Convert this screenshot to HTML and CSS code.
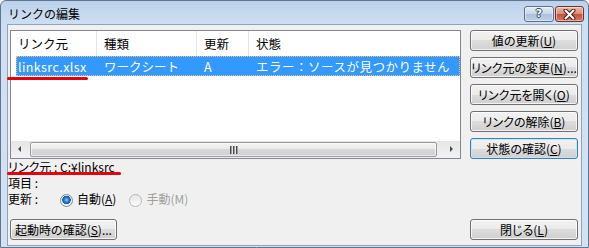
FILE: index.html
```html
<!DOCTYPE html>
<html lang="ja">
<head>
    <meta charset="UTF-8">
    <title>リンクの編集</title>
    <link rel="stylesheet" href="styles.css">
</head>
<body>
    <div class="window">
        <div class="titlebar">
            <span class="title">リンクの編集</span>
            <div class="caption-buttons">
                <span class="cap help">?</span>
                <span class="cap close">
                    <svg width="13" height="11" viewBox="0 0 13 11">
                        <path d="M2.5 1.5 L10.5 9.5 M10.5 1.5 L2.5 9.5" stroke="#4a2018" stroke-width="4" stroke-linecap="round"/>
                        <path d="M2.5 1.5 L10.5 9.5 M10.5 1.5 L2.5 9.5" stroke="#ffffff" stroke-width="2" stroke-linecap="round"/>
                    </svg>
                </span>
            </div>
        </div>

        <div class="client">
            <div class="left">
                <div class="listbox">
                    <div class="list-head">
                        <span class="cell c1">リンク元</span>
                        <span class="cell c2">種類</span>
                        <span class="cell c3">更新</span>
                        <span class="cell c4">状態</span>
                    </div>
                    <div class="list-body">
                        <div class="row selected">
                            <span class="cell c1">linksrc.xlsx</span>
                            <span class="cell c2">ワークシート</span>
                            <span class="cell c3">A</span>
                            <span class="cell c4 status">エラー：ソースが見つかりません</span>
                        </div>
                    </div>
                    <div class="hscroll">
                        <span class="arrow arrow-left"></span>
                        <span class="thumb"><span class="grip"></span></span>
                        <span class="arrow arrow-right"></span>
                    </div>
                </div>

                <div class="info">
                    <span>リンク元&nbsp;:</span><span>C:¥linksrc</span>
                    <span>項目&nbsp;:</span><span></span>
                    <span>更新&nbsp;:</span>
                    <span class="radios">
                        <label class="radio"><span class="dot checked"></span><span>自動(<u>A</u>)</span></label>
                        <label class="radio disabled"><span class="dot"></span><span>手動(M)</span></label>
                    </span>
                </div>

                <button class="btn start-btn">起動時の確認(<u>S</u>)...</button>
            </div>

            <div class="right">
                <button class="btn">値の更新(<u>U</u>)</button>
                <button class="btn">リンク元の変更(<u>N</u>)...</button>
                <button class="btn">リンク元を開く(<u>O</u>)</button>
                <button class="btn">リンクの解除(<u>B</u>)</button>
                <button class="btn focused">状態の確認(<u>C</u>)</button>
                <button class="btn close-btn">閉じる(<u>L</u>)</button>
            </div>
        </div>

        <div class="mark mark-file"></div>
        <div class="mark mark-source"></div>
    </div>
</body>
</html>
```

FILE: styles.css
```css
body {
    margin: 0;
    font-family: "Noto Sans CJK JP", sans-serif;
    font-size: 12px;
    color: #000;
}

.window {
    position: relative;
    width: 589px;
    height: 248px;
    box-sizing: border-box;
    border: 1px solid #5f7590;
    border-radius: 6px 6px 0 0;
    padding-bottom: 1px;
    background: linear-gradient(#bcd2eb, #cfdff2 24px, #d3e2f3);
    display: flex;
    flex-direction: column;
    overflow: hidden;
}

.titlebar {
    height: 23px;
    flex-shrink: 0;
    display: flex;
    align-items: center;
    padding: 0 4px 0 7px;
}

.title {
    flex: 1;
    line-height: 14px;
    margin-top: 2px;
}

.caption-buttons {
    display: flex;
    gap: 1px;
    align-self: flex-start;
    margin-top: 5px;
}

.cap {
    width: 30px;
    height: 16px;
    box-sizing: border-box;
    border: 1px solid #5e718a;
    border-radius: 3px;
    display: flex;
    align-items: center;
    justify-content: center;
    box-shadow: inset 0 0 0 1px rgba(255, 255, 255, 0.45);
}

.cap.help {
    background: linear-gradient(#e4ecf6, #c6d6ea 50%, #aac0db 50%, #bcd0e8);
    color: #fff;
    font-family: "DejaVu Sans", sans-serif;
    font-weight: bold;
    font-size: 11px;
    line-height: 12px;
    text-shadow: 1px 0 0 #35455a, -1px 0 0 #35455a, 0 1px 0 #35455a, 0 -1px 0 #35455a;
}

.cap.close {
    width: 29px;
    border-color: #6b3228;
    background: linear-gradient(#ecb9ab, #d98b77 50%, #c4513a 50%, #d9785f);
}

.client {
    flex: 1;
    margin: 0 6px;
    border: 1px solid #8ea3bc;
    background-color: #f0f0f0;
    display: flex;
    gap: 9px;
    padding: 5px 3px 5px 2px;
}

.left {
    width: 451px;
    display: flex;
    flex-direction: column;
}

.right {
    width: 108px;
    display: flex;
    flex-direction: column;
    gap: 6px;
}

.listbox {
    height: 129px;
    box-sizing: border-box;
    border: 1px solid #828790;
    background-color: #fff;
    display: flex;
    flex-direction: column;
}

.list-head {
    height: 25px;
    display: flex;
    flex-shrink: 0;
    font-size: 12.5px;
}

.list-head .cell {
    border-right: 1px solid #e3e5e8;
}

.list-head .c4 {
    border-right: none;
}

.cell {
    box-sizing: border-box;
    padding-left: 7px;
    display: flex;
    align-items: center;
    white-space: nowrap;
    overflow: hidden;
}

.c1 { width: 86px; }
.c2 { width: 100px; }
.c3 { width: 52px; }
.c4 { flex: 1; }

.list-body {
    flex: 1;
}

.row {
    height: 20px;
    display: flex;
    margin-left: 5px;
    font-size: 12.5px;
}

.row .c1 {
    width: 81px;
    padding-left: 2px;
    letter-spacing: 0.4px;
}

.row .status {
    letter-spacing: 0.5px;
}

.row.selected {
    background-color: #3399ff;
    color: #fff;
    outline: 1px dotted #f2c07a;
    outline-offset: -1px;
}

.hscroll {
    height: 17px;
    flex-shrink: 0;
    display: flex;
    align-items: center;
    background: linear-gradient(#e6e6e6, #f2f2f2);
}

.arrow {
    width: 18px;
    height: 17px;
    position: relative;
    flex-shrink: 0;
}

.arrow::after {
    content: "";
    position: absolute;
    top: 5px;
    border-top: 3px solid transparent;
    border-bottom: 3px solid transparent;
}

.arrow-left::after {
    left: 7px;
    border-right: 3px solid #4a4a4a;
}

.arrow-right {
    margin-left: auto;
}

.arrow-right::after {
    left: 8px;
    border-left: 3px solid #4a4a4a;
}

.thumb {
    width: 407px;
    height: 15px;
    margin-left: 1px;
    box-sizing: border-box;
    border: 1px solid #9a9a9a;
    border-radius: 2px;
    background: linear-gradient(#f4f4f4, #eaeaea 45%, #d8d8d8 50%, #cfcfcf);
    box-shadow: inset 0 0 0 1px rgba(255, 255, 255, 0.6);
    display: flex;
    align-items: center;
    justify-content: center;
}

.grip {
    width: 8px;
    height: 8px;
    background: repeating-linear-gradient(90deg, #4c4c4c 0 1px, #9c9c9c 1px 2px, #e6e6e6 2px 3px);
}

.info {
    display: grid;
    grid-template-columns: 52px auto;
    margin-left: -2px;
    line-height: 16px;
    font-feature-settings: "palt";
}

.radios {
    display: flex;
    align-items: center;
    gap: 13px;
}

.radio {
    display: flex;
    align-items: center;
    gap: 4px;
}

.radio.disabled {
    color: #a0a0a0;
}

.dot {
    width: 13px;
    height: 13px;
    box-sizing: border-box;
    border-radius: 50%;
    border: 1px solid #b9b9b9;
    background: linear-gradient(#e6e6e6, #fbfbfb);
    margin-top: 2px;
}

.dot.checked {
    border-color: #7f8a96;
    background: radial-gradient(circle at 50% 45%, #9fd2ff 0, #2c86d8 2px, #175a9e 4px, #e8eef3 4.5px, #f8f8f8 6px);
}

.btn {
    height: 21px;
    box-sizing: border-box;
    padding: 0;
    border: 1px solid #707070;
    border-radius: 3px;
    background: linear-gradient(#f2f2f2, #ebebeb 50%, #dddddd 50%, #cfcfcf);
    box-shadow: inset 0 0 0 1px rgba(255, 255, 255, 0.75);
    font-family: "Noto Sans CJK JP", sans-serif;
    font-size: 12px;
    line-height: 14px;
    color: #000;
    font-feature-settings: "palt";
}

.btn.focused {
    border-color: #3c7fb1;
    box-shadow: inset 0 0 0 1px #c4e5f6;
}

.start-btn {
    width: 107px;
    margin-top: auto;
}

.close-btn {
    margin-top: auto;
}

.mark {
    position: absolute;
    height: 3px;
    border-radius: 2px;
    background-color: #e6000a;
}

.mark-file {
    left: 6px;
    top: 76px;
    width: 81px;
}

.mark-source {
    left: 6px;
    top: 171px;
    width: 114px;
}
```
